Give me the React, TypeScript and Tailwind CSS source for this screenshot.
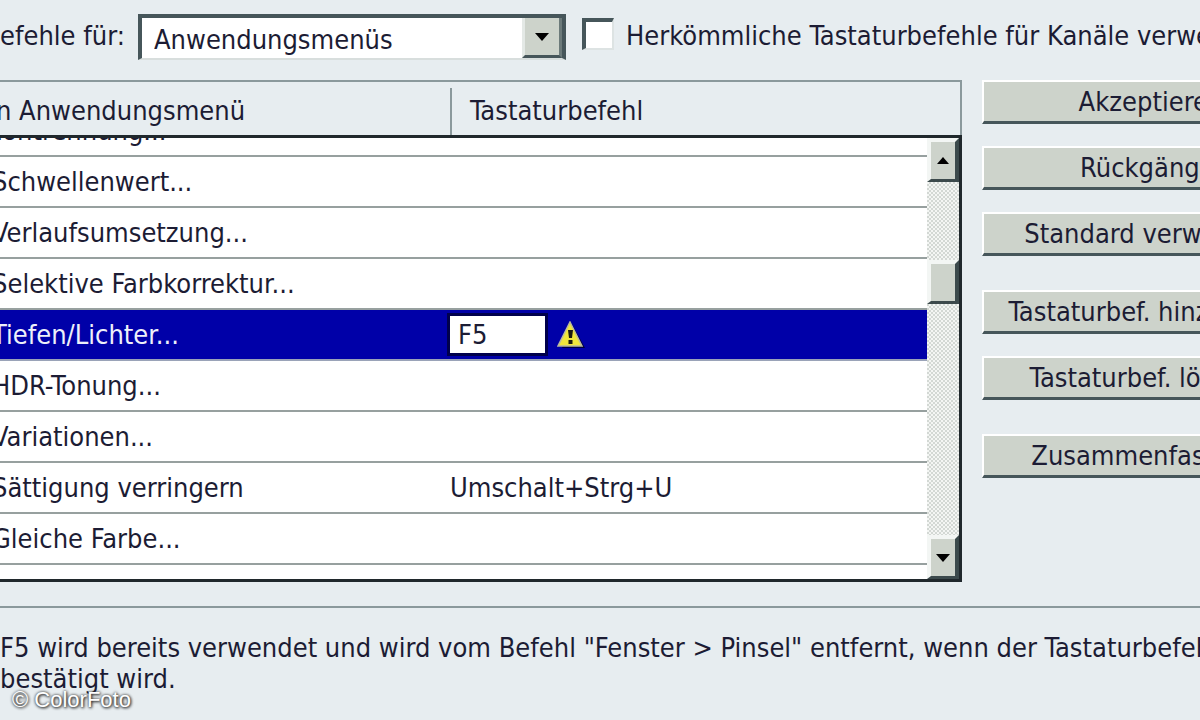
import type { ReactNode } from 'react'

const rows = [
  { name: 'Tontrennung...', shortcut: '' },
  { name: 'Schwellenwert...', shortcut: '' },
  { name: 'Verlaufsumsetzung...', shortcut: '' },
  { name: 'Selektive Farbkorrektur...', shortcut: '' },
  { name: 'Tiefen/Lichter...', shortcut: 'F5', editing: true },
  { name: 'HDR-Tonung...', shortcut: '' },
  { name: 'Variationen...', shortcut: '' },
  { name: 'Sättigung verringern', shortcut: 'Umschalt+Strg+U' },
  { name: 'Gleiche Farbe...', shortcut: '' },
  { name: 'Farbe ersetzen...', shortcut: '' },
]

const buttonGroups = [
  ['Akzeptieren', 'Rückgängig', 'Standard verwenden'],
  ['Tastaturbef. hinzufügen', 'Tastaturbef. löschen'],
  ['Zusammenfassen...'],
]

function Arrow({ up = false }) {
  return (
    <svg viewBox="0 0 16 8" className="h-2 w-4" fill="#000" aria-hidden="true">
      <path d={up ? 'M8 0 L14 7 H2 Z' : 'M8 8 L15 0 H1 Z'} />
    </svg>
  )
}

function ScrollButton({ label, children }: { label: string; children?: ReactNode }) {
  return (
    <button
      aria-label={label}
      className="flex h-11 w-full shrink-0 items-center justify-center border-t-4 border-r-4 border-b-3 border-l-4 border-t-[#f3f6f4] border-r-[#3c4a4c] border-b-[#3c4a4c] border-l-[#f3f6f4] bg-[#cdd3cb]"
    >
      {children}
    </button>
  )
}

function Warning() {
  return (
    <svg viewBox="0 0 28 28" className="h-7 w-7" aria-hidden="true">
      <path d="M15 3 L28 27 H5 Z" fill="#00003a" />
      <path d="M13 1 L25 25 H1 Z" fill="#f0e63c" stroke="#b9b9a0" strokeWidth="1.5" />
      <path d="M11 9 h5 l-1 8 h-3 Z M11.5 19 h4 v4 h-4 Z" fill="#1c1a10" />
    </svg>
  )
}

export default function App() {
  return (
    <div className="min-h-screen overflow-hidden bg-[#e7edf0] font-['DejaVu_Sans_Condensed','DejaVu_Sans',sans-serif] text-[27px] leading-[31px] text-[#1c1c34]">
      <div className="flex h-20 items-start pt-3.5 whitespace-nowrap">
        <label htmlFor="menu" className="w-[138px] shrink-0 pt-1.5">
          efehle für:
        </label>
        <div className="relative w-[428px] shrink-0">
          <select
            id="menu"
            className="h-[46px] w-full appearance-none border-t-4 border-r-4 border-b-2 border-l-4 border-[#46565a] border-b-[#d8dedd] bg-white pt-0.5 pl-3 outline-none"
          >
            <option>Anwendungsmenüs</option>
          </select>
          <span className="pointer-events-none absolute top-1 right-1 flex h-10 w-10 items-center justify-center border-r-3 border-b-3 border-l-3 border-r-[#6c7a7a] border-b-[#46565a] border-l-[#e4e9e6] bg-[#cdd3cb]">
            <Arrow />
          </span>
        </div>
        <input
          id="channels"
          type="checkbox"
          className="mt-1 ml-4 h-8 w-8 shrink-0 appearance-none border-t-4 border-r-2 border-b-2 border-l-4 border-t-[#46565a] border-r-[#dde3e3] border-b-[#dde3e3] border-l-[#46565a] bg-white"
        />
        <label htmlFor="channels" className="pt-1.5 pl-3">
          Herkömmliche Tastaturbefehle für Kanäle verwenden
        </label>
      </div>

      <div className="flex items-start">
        <div className="w-[962px] shrink-0">
          <div className="flex h-[55px] items-end border-t-2 border-r-2 border-[#8b999c] leading-[45px] whitespace-nowrap">
            <div className="w-[450px] shrink-0 pb-0.5 -indent-1">n Anwendungsmenü</div>
            <div className="flex-1 border-l-2 border-[#8b999c] pb-0.5 pl-[18px]">Tastaturbefehl</div>
          </div>
          <div className="flex h-[447px] overflow-hidden border-t-3 border-r-3 border-b-3 border-[#20282c]">
            <div className="flex min-w-0 flex-1 flex-col justify-center overflow-hidden bg-white pt-1">
              <table className="w-full table-fixed border-collapse">
                <colgroup>
                  <col className="w-[450px]" />
                  <col />
                </colgroup>
                <tbody>
                  {rows.map((row) => (
                    <tr
                      key={row.name}
                      className={
                        row.editing
                          ? 'h-[51px] border-b-2 border-[#9aa3b8] bg-[#0000a8] text-[#eef0fa]'
                          : 'h-[51px] border-b-2 border-[#97a09f]'
                      }
                    >
                      <td className="p-0 -indent-2 whitespace-nowrap">{row.name}</td>
                      <td className="p-0">
                        {row.editing ? (
                          <div className="flex items-center gap-3">
                            <input
                              aria-label="Tastaturbefehl"
                              defaultValue={row.shortcut}
                              className="h-[37px] w-[95px] bg-white pl-2 text-[#1c1c34] outline-3 outline-[#00004c]"
                            />
                            <Warning />
                          </div>
                        ) : (
                          row.shortcut
                        )}
                      </td>
                    </tr>
                  ))}
                </tbody>
              </table>
            </div>
            <div className="flex w-8 shrink-0 flex-col bg-[repeating-conic-gradient(#d3d8d4_0_25%,#f4f6f4_0_50%)] bg-size-[4px_4px]">
              <ScrollButton label="Nach oben">
                <Arrow up />
              </ScrollButton>
              <div className="flex-1 pt-[78px]">
                <ScrollButton label="Bildlauf" />
              </div>
              <ScrollButton label="Nach unten">
                <Arrow />
              </ScrollButton>
            </div>
          </div>
        </div>

        <div className="ml-5 flex w-[336px] shrink-0 flex-col gap-[34px]">
          {buttonGroups.map((group) => (
            <div key={group[0]} className="flex flex-col gap-[22px]">
              {group.map((label) => (
                <button
                  key={label}
                  className="h-11 border-t-2 border-b-3 border-l-2 border-t-white border-b-[#46565a] border-l-white bg-[#cdd3cb] whitespace-nowrap"
                >
                  {label}
                </button>
              ))}
            </div>
          ))}
        </div>
      </div>

      <div className="relative mt-6 border-t-2 border-[#8b999c] pt-6">
        <p className="whitespace-nowrap">
          F5 wird bereits verwendet und wird vom Befehl "Fenster &gt; Pinsel" entfernt, wenn der Tastaturbefehl
          <br />
          bestätigt wird.
        </p>
        <span className="absolute top-[78px] left-3 font-['Liberation_Sans',sans-serif] text-[22px] leading-7 text-white [text-shadow:1px_1px_3px_#222,0_0_3px_#333]">
          © ColorFoto
        </span>
      </div>
    </div>
  )
}
